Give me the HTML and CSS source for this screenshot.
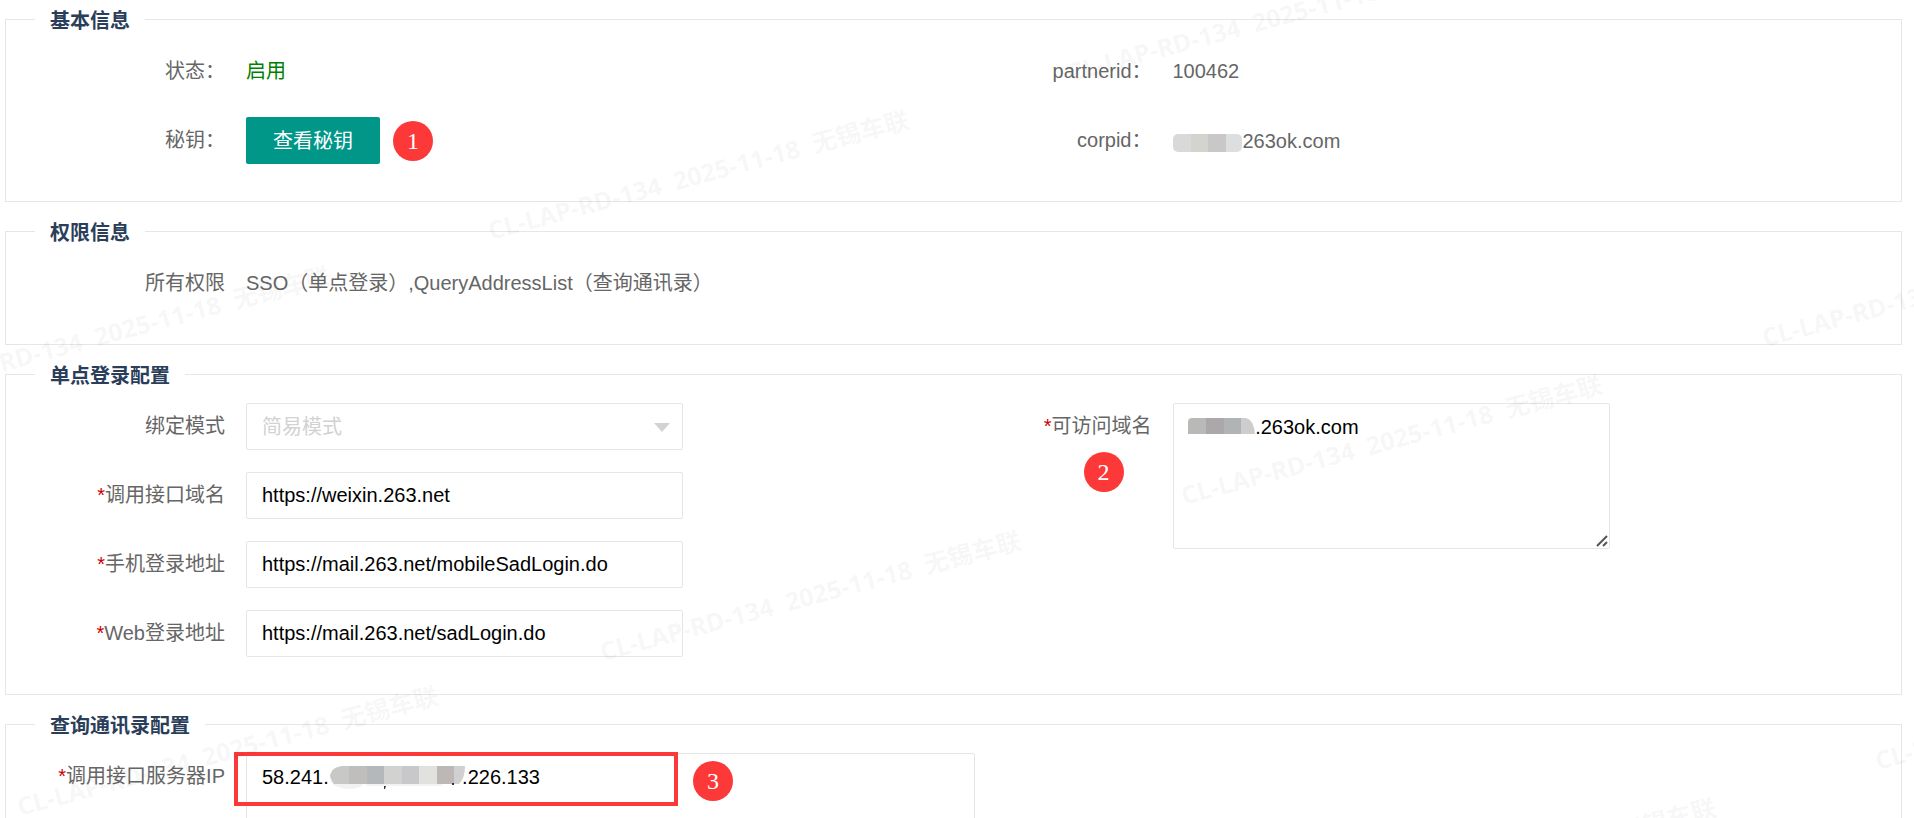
FILE: index.html
```
<!DOCTYPE html>
<html lang="zh-CN">
<head>
    <meta charset="UTF-8">
    <meta name="viewport" content="width=device-width, initial-scale=1.0">
    <title>基本信息</title>
    <link rel="stylesheet" href="styles.css">
</head>
<body>
    <form class="page">
        <fieldset class="section">
            <legend>基本信息</legend>
            <div class="columns">
                <div class="column">
                    <div class="row">
                        <span class="label">状态：</span>
                        <span class="text enabled">启用</span>
                    </div>
                    <div class="row">
                        <span class="label">秘钥：</span>
                        <button type="button" class="btn">查看秘钥</button>
                        <span class="badge">1</span>
                    </div>
                </div>
                <div class="column">
                    <div class="row">
                        <span class="label">partnerid：</span>
                        <span class="text">100462</span>
                    </div>
                    <div class="row">
                        <span class="label">corpid：</span>
                        <span class="text masked">
                            <svg class="mask" width="70" height="22" viewBox="0 0 70 22">
                                <clipPath id="m1"><rect y="4" width="69" height="18" rx="5"/></clipPath>
                                <g clip-path="url(#m1)">
                                    <rect width="18" height="22" fill="#d9d9d9"/>
                                    <rect x="18" width="17" height="22" fill="#d3d3d0"/>
                                    <rect x="35" width="18" height="22" fill="#cac7c8"/>
                                    <rect x="53" width="17" height="22" fill="#dcdee0"/>
                                </g>
                            </svg>
                            <span>263ok.com</span>
                        </span>
                    </div>
                </div>
            </div>
        </fieldset>

        <fieldset class="section">
            <legend>权限信息</legend>
            <div class="row">
                <span class="label">所有权限</span>
                <span class="text">SSO（单点登录）,QueryAddressList（查询通讯录）</span>
            </div>
        </fieldset>

        <fieldset class="section">
            <legend>单点登录配置</legend>
            <div class="columns">
                <div class="column">
                    <div class="row">
                        <label class="label" for="mode">绑定模式</label>
                        <div class="control select">
                            <select id="mode" disabled>
                                <option>简易模式</option>
                            </select>
                        </div>
                    </div>
                    <div class="row">
                        <label class="label" for="api"><i>*</i>调用接口域名</label>
                        <div class="control"><input type="text" id="api" value="https://weixin.263.net"></div>
                    </div>
                    <div class="row">
                        <label class="label" for="mobile"><i>*</i>手机登录地址</label>
                        <div class="control"><input type="text" id="mobile" value="https://mail.263.net/mobileSadLogin.do"></div>
                    </div>
                    <div class="row">
                        <label class="label" for="web"><i>*</i>Web登录地址</label>
                        <div class="control"><input type="text" id="web" value="https://mail.263.net/sadLogin.do"></div>
                    </div>
                </div>
                <div class="column">
                    <div class="row">
                        <label class="label" for="domains"><i>*</i>可访问域名</label>
                        <span class="badge badge-domain">2</span>
                        <div class="control">
                            <textarea id="domains" spellcheck="false">            .263ok.com</textarea>
                            <svg class="mask mask-domain" width="68" height="17" viewBox="0 0 68 17">
                                <path d="M0 17V5q0-4 4-4h14v16z" fill="#b9b9b7"/>
                                <rect x="18" y="1" width="18" height="16" fill="#aca8aa"/>
                                <rect x="36" y="1" width="17" height="16" fill="#b0b4b5"/>
                                <path d="M53 1h5q8 2 9 16H53z" fill="#cdcdcd"/>
                            </svg>
                            <svg class="grip" width="12" height="12" viewBox="0 0 12 12">
                                <path d="M1 11L11 1M7 11l4-4" stroke="#555" stroke-width="2"/>
                            </svg>
                        </div>
                    </div>
                </div>
            </div>
        </fieldset>

        <fieldset class="section">
            <legend>查询通讯录配置</legend>
            <div class="row">
                <label class="label" for="ip"><i>*</i>调用接口服务器IP</label>
                <div class="control wide">
                    <textarea id="ip" spellcheck="false">58.241.                        .226.133</textarea>
                    <svg class="mask mask-ip" width="136" height="26" viewBox="0 0 136 26">
                        <path d="M0 16h36q-4 8-16 8Q6 24 0 16z" fill="#f2f2f2"/>
                        <path d="M36 18h76v3H36z" fill="#f3f3f3"/>
                        <path d="M19 1v18H4Q0 14 0 10 2 2 12 1z" fill="#c8c8c7"/>
                        <rect x="19" y="1" width="18" height="18" fill="#bfbebd"/>
                        <rect x="37" y="1" width="17" height="18" fill="#b5b8ba"/>
                        <rect x="54" y="1" width="18" height="18" fill="#d2d2d0"/>
                        <rect x="72" y="1" width="17" height="18" fill="#c8c8ca"/>
                        <rect x="89" y="1" width="18" height="18" fill="#e1e1e0"/>
                        <rect x="107" y="1" width="17" height="18" fill="#bdb8b5"/>
                        <path d="M124 1h11q0 12-6 18h-5z" fill="#d0d0d0"/>
                        <path d="M54 21h2l-1 3h-1zM122 18h2v2h-2z" fill="#333"/>
                    </svg>
                    <div class="highlight"></div>
                    <span class="badge badge-ip">3</span>
                </div>
            </div>
        </fieldset>
    </form>

    <svg class="watermark" aria-hidden="true">
        <defs>
            <text id="wm" transform="rotate(-15)">CL-LAP-RD-134&nbsp; 2025-11-18&nbsp; 无锡车联</text>
        </defs>
        <use href="#wm" x="1070" y="82"/>
        <use href="#wm" x="491" y="240"/>
        <use href="#wm" x="-88" y="396"/>
        <use href="#wm" x="1765" y="347"/>
        <use href="#wm" x="1184" y="505"/>
        <use href="#wm" x="603" y="661"/>
        <use href="#wm" x="20" y="816"/>
        <use href="#wm" x="1878" y="770"/>
        <use href="#wm" x="1298" y="928"/>
    </svg>
</body>
</html>
```
FILE: styles.css
```
* {
    box-sizing: border-box;
}
body {
    position: relative;
    height: 100vh;
    margin: 0;
    overflow: hidden;
    background: #fff;
    color: #666;
    font: 20px/24px "Liberation Sans", "Noto Sans CJK SC", sans-serif;
}
.page {
    display: flex;
    flex-direction: column;
    gap: 14px;
    padding: 4px 12px 0 5px;
}
.section {
    min-width: 0;
    margin: 0;
    padding: 14px 42px 15px 0;
    border: 1px solid #e6e6e6;
}
.section legend {
    margin-left: 29px;
    padding: 4px 15px 0;
    color: #2b3e59;
    font-weight: bold;
    line-height: 26px;
}
.columns {
    display: grid;
    grid-template-columns: 1fr 1fr;
}
.row {
    position: relative;
    display: flex;
    min-height: 47px;
    margin-bottom: 22px;
}
.label {
    flex: 0 0 240px;
    padding: 11px 21px 11px 0;
    text-align: right;
    white-space: nowrap;
}
.label i {
    color: #c00;
    font-style: normal;
}
.text {
    padding: 11px 0;
}
.enabled {
    color: green;
}
.masked {
    display: flex;
    align-items: center;
}
.control {
    position: relative;
    width: 100%;
    max-width: 437px;
}
.wide {
    max-width: 729px;
}
.control input,
.control select,
.control textarea {
    display: block;
    width: 100%;
    height: 47px;
    padding: 0 15px;
    border: 1px solid #e6e6e6;
    border-radius: 2px;
    background: #fff;
    color: #000;
    font: inherit;
    outline: none;
}
.control textarea {
    height: 146px;
    padding: 11px 15px;
    resize: none;
}
.control select {
    appearance: none;
    color: #d2d2d2;
    opacity: 1;
}
.select::after {
    content: "";
    position: absolute;
    top: 20px;
    right: 13px;
    border: 8px solid transparent;
    border-top: 9px solid #d2d2d2;
    border-bottom: 0;
}
.btn {
    height: 47px;
    padding: 0 27px;
    border: 0;
    border-radius: 2px;
    background: #009688;
    color: #fff;
    font: inherit;
    white-space: nowrap;
}
.badge {
    flex: none;
    width: 40px;
    height: 40px;
    margin: 4px 0 0 13px;
    border-radius: 50%;
    background: #fc3838;
    color: #fff;
    font: 24px/40px "Liberation Serif", serif;
    text-align: center;
}
.badge-domain,
.badge-ip {
    position: absolute;
    margin: 0;
}
.badge-domain {
    top: 49px;
    left: 151px;
}
.badge-ip {
    top: 8px;
    left: 447px;
}
.mask {
    display: block;
}
.mask-domain,
.mask-ip {
    position: absolute;
    top: 14px;
}
.mask-domain {
    left: 15px;
}
.mask-ip {
    top: 12px;
    left: 84px;
}
.grip {
    position: absolute;
    right: 2px;
    bottom: 2px;
}
.highlight {
    position: absolute;
    top: -1px;
    left: -12px;
    width: 444px;
    height: 54px;
    border: 4px solid #fc3838;
    pointer-events: none;
}
.watermark {
    position: absolute;
    top: 0;
    left: 0;
    width: 100%;
    height: 100%;
    fill: rgba(0, 0, 0, 0.05);
    font: bold 25px "Noto Sans", "Noto Sans CJK SC", sans-serif;
    pointer-events: none;
}
```
